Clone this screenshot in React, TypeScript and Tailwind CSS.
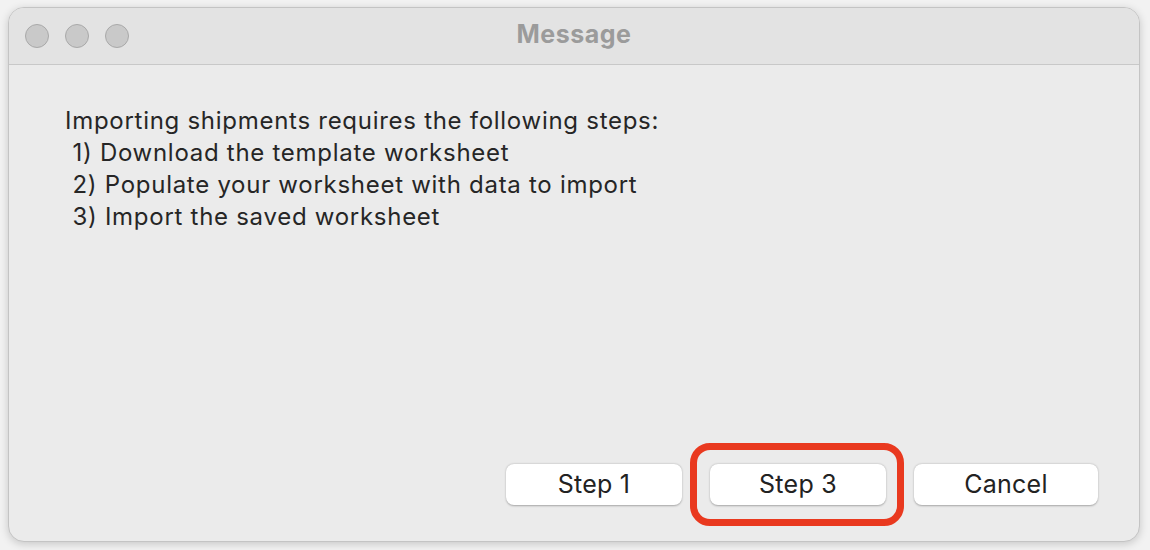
import React from 'react';

const font = { fontFamily: 'Inter, "Noto Sans", sans-serif' };

function TrafficLight() {
  return <div className="h-[24px] w-[24px] rounded-full border border-[#a9a9a9] bg-[#c9c9c9]" />;
}

function MacButton({ label, width }: { label: string; width: string }) {
  return (
    <button
      className={`flex h-[41px] items-center justify-center rounded-[8px] bg-white text-[25px] tracking-[0.01em] text-[#222] shadow-[0_0.5px_2px_rgba(0,0,0,0.3)] ${width}`}
    >
      {label}
    </button>
  );
}

export default function App() {
  return (
    <div className="h-[550px] w-[1150px] bg-[#f2f2f2] pl-[8px] pt-[7px]" style={font}>
      <div className="flex h-[535px] w-[1132px] flex-col overflow-hidden rounded-[16px] border border-[#c4c4c4] bg-[#ebebeb] shadow-[0_2px_8px_rgba(0,0,0,0.18)]">
        {/* title bar */}
        <div className="relative flex h-[57px] shrink-0 items-center border-b border-[#c8c8c8] bg-[#e3e3e3] pl-[16px]">
          <div className="flex gap-[16px]">
            <TrafficLight />
            <TrafficLight />
            <TrafficLight />
          </div>
          <div className="absolute inset-0 flex items-center justify-center pb-[2px] text-[25px] font-bold tracking-[0.02em] text-[#9b9b9b]">
            Message
          </div>
        </div>

        {/* body */}
        <div className="flex flex-1 flex-col pl-[56px] pr-[41px] pt-[40px] pb-[36px]">
          <div className="whitespace-pre text-[24px] leading-[32px] tracking-[0.03em] text-[#262626]">
            <div>Importing shipments requires the following steps:</div>
            <div> 1) Download the template worksheet</div>
            <div> 2) Populate your worksheet with data to import</div>
            <div> 3) Import the saved worksheet</div>
          </div>

          <div className="mt-auto flex justify-end gap-[28px]">
            <MacButton label="Step 1" width="w-[176px]" />
            <div className="relative">
              <MacButton label="Step 3" width="w-[176px]" />
              <div className="pointer-events-none absolute -bottom-[21px] -left-[20px] -right-[18px] -top-[21px] rounded-[20px] border-[7px] border-[#e9391f]" />
            </div>
            <MacButton label="Cancel" width="w-[184px]" />
          </div>
        </div>
      </div>
    </div>
  );
}
